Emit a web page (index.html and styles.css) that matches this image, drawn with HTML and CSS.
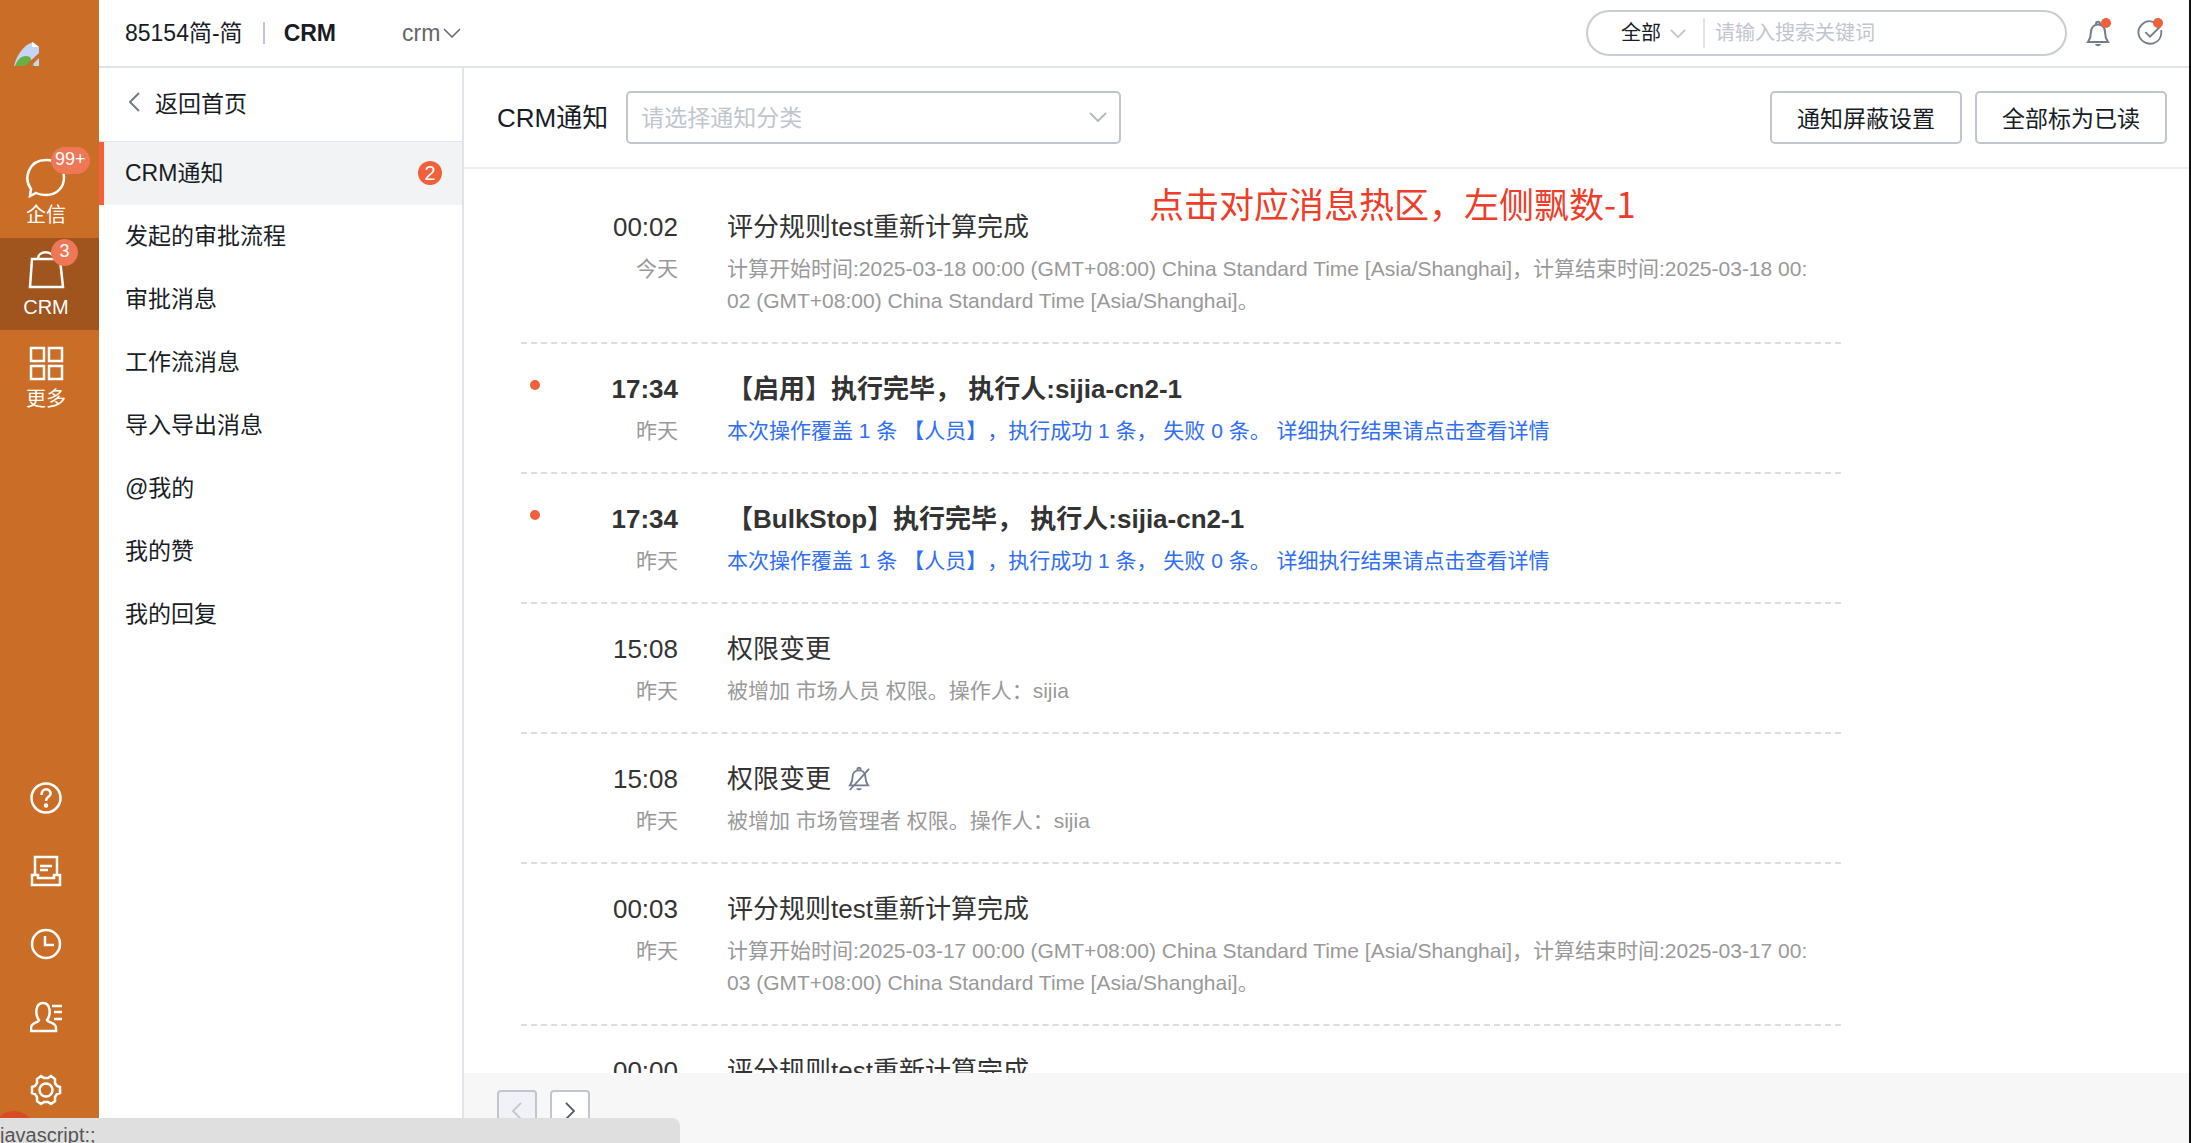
FILE: index.html
```
<!DOCTYPE html>
<html lang="zh-CN">
<head>
  <meta charset="UTF-8" />
  <meta name="viewport" content="width=device-width, initial-scale=1.0"/>
  <title>CRM通知</title>
  <link rel="stylesheet" href="styles.css">
</head>
<body>

  <aside class="rail">
    <svg class="avatar" viewBox="0 0 25 24">
      <path d="M0 24C3 12 10 3 19 0L25 5V24Z" fill="#c5d6f4"/>
      <path d="M18 0L25 5H18Z" fill="#fff"/>
      <path d="M1 24C4 15 10 12 16 15L20 24Z" fill="#6aae45"/>
      <path d="M11 24L25 11V16L17 24Z" fill="#ca6d26"/>
    </svg>

    <nav class="rail-menu">
      <a href="#" class="rail-item">
        <span class="rail-icon">
          <svg viewBox="0 0 40 40"><path d="M4 38L5 31C-3 20 3 2 20 2C44 2 44 37 20 37C15 37 12 36 10 35Z"/></svg>
          <span class="badge">99+</span>
        </span>
        企信
      </a>
      <a href="#" class="rail-item active">
        <span class="rail-icon">
          <svg viewBox="0 0 40 40"><path d="M6 9H34L37 37H4ZM12 9C12 0 27 0 28 9"/></svg>
          <span class="badge">3</span>
        </span>
        CRM
      </a>
      <a href="#" class="rail-item">
        <span class="rail-icon">
          <svg viewBox="0 0 40 40"><path d="M5 6H18V19H5ZM23 6H36V19H23ZM5 24H18V37H5ZM23 24H36V37H23Z"/></svg>
        </span>
        更多
      </a>
    </nav>

    <nav class="rail-tools">
      <a href="#" aria-label="帮助"><svg viewBox="0 0 32 32"><circle cx="16" cy="16" r="14.5"/><path d="M11.500 13C11.500 5 21 6 20.500 12C20 15 16 15 16 19"/><circle cx="16" cy="23.500" r="1"/></svg></a>
      <a href="#" aria-label="收件箱"><svg viewBox="0 0 32 32"><path d="M5 20V2H27V20M2 20H8V23H24V20H30V30H2ZM10 11H22M10 15H18"/></svg></a>
      <a href="#" aria-label="最近"><svg viewBox="0 0 32 32"><circle cx="16" cy="16" r="14"/><path d="M15 8V17H24"/></svg></a>
      <a href="#" aria-label="联系人"><svg viewBox="0 0 32 32"><path d="M9 19C5 14 5 2 13 2S21 14 17 19C18 22 26 21 26 27V30H1V27C1 21 9 22 9 19ZM22 5H32M24 11H32M24 18H32"/></svg></a>
      <a href="#" aria-label="设置"><svg viewBox="0 0 32 32"><circle cx="16" cy="16" r="6.500"/><path d="M11 2L14 4H18L21 2L25 5V9L27 12L30 13V19L27 20L25 23V27L21 30L18 28H14L11 30L7 27V23L5 20L2 19V13L5 12L7 9V5Z"/></svg></a>
    </nav>
    <span class="rail-dot"></span>
  </aside>

  <div class="page">
    <header class="topbar">
      <span class="company">85154简-简</span>
      <strong class="app-name">CRM</strong>
      <button class="app-switch">crm<svg viewBox="0 0 18 10"><path d="M1 1L9 9L17 1"/></svg></button>
      <div class="search">
        <button class="search-scope">全部<svg viewBox="0 0 18 10"><path d="M1 1L9 9L17 1"/></svg></button>
        <input type="text" placeholder="请输入搜索关键词" aria-label="搜索">
      </div>
      <button class="top-icon" aria-label="提醒">
        <svg viewBox="0 0 24 28"><path d="M2 23H22C20 20 19 18 19 13C19 3 5 3 5 13C5 18 4 20 2 23ZM10 5C10 2 14 2 14 5"/><path class="fill" d="M9 25H15C14 28 10 28 9 25Z"/></svg>
      </button>
      <button class="top-icon" aria-label="待办">
        <svg viewBox="0 0 28 28"><path d="M20 3C8-3-2 9 3 19C9 30 28 27 26 11M9 13L14 18L25 7"/></svg>
      </button>
    </header>

    <div class="body">
      <nav class="side">
        <a href="#" class="back"><svg viewBox="0 0 11 20"><path d="M10 1L1 10L10 19"/></svg>返回首页</a>
        <a href="#" class="side-item active">CRM通知 <span class="count">2</span></a>
        <a href="#" class="side-item">发起的审批流程</a>
        <a href="#" class="side-item">审批消息</a>
        <a href="#" class="side-item">工作流消息</a>
        <a href="#" class="side-item">导入导出消息</a>
        <a href="#" class="side-item">@我的</a>
        <a href="#" class="side-item">我的赞</a>
        <a href="#" class="side-item">我的回复</a>
      </nav>

      <main class="main">
        <div class="toolbar">
          <label for="category">CRM通知</label>
          <div class="select-wrap">
            <select id="category"><option>请选择通知分类</option></select>
            <svg viewBox="0 0 18 10"><path d="M1 1L9 9L17 1"/></svg>
          </div>
          <button class="btn">通知屏蔽设置</button>
          <button class="btn">全部标为已读</button>
        </div>

        <p class="note">点击对应消息热区，左侧飘数-1</p>

        <div class="list">
          <article class="item">
            <div class="when"><time>00:02</time><span>今天</span></div>
            <div class="text">
              <h3>评分规则test重新计算完成</h3>
              <p>计算开始时间:2025-03-18 00:00 (GMT+08:00) China Standard Time [Asia/Shanghai]，计算结束时间:2025-03-18 00:02 (GMT+08:00) China Standard Time [Asia/Shanghai]。</p>
            </div>
          </article>
          <article class="item unread">
            <div class="when"><time>17:34</time><span>昨天</span></div>
            <div class="text">
              <h3>【启用】执行完毕， 执行人:sijia-cn2-1</h3>
              <p><a href="#">本次操作覆盖 1 条 【人员】，执行成功 1 条， 失败 0 条。 详细执行结果请点击查看详情</a></p>
            </div>
          </article>
          <article class="item unread">
            <div class="when"><time>17:34</time><span>昨天</span></div>
            <div class="text">
              <h3>【BulkStop】执行完毕， 执行人:sijia-cn2-1</h3>
              <p><a href="#">本次操作覆盖 1 条 【人员】，执行成功 1 条， 失败 0 条。 详细执行结果请点击查看详情</a></p>
            </div>
          </article>
          <article class="item">
            <div class="when"><time>15:08</time><span>昨天</span></div>
            <div class="text">
              <h3>权限变更</h3>
              <p>被增加 市场人员 权限。操作人：sijia</p>
            </div>
          </article>
          <article class="item">
            <div class="when"><time>15:08</time><span>昨天</span></div>
            <div class="text">
              <h3>权限变更 <svg class="muted" viewBox="0 0 24 26"><path d="M2 20H22C20 17 19 15 19 11C19 1 5 1 5 11C5 15 4 17 2 20ZM10 3C10 0 14 0 14 3M2 25L23 2"/><path class="fill" d="M9 23H15C14 26 10 26 9 23Z"/></svg></h3>
              <p>被增加 市场管理者 权限。操作人：sijia</p>
            </div>
          </article>
          <article class="item">
            <div class="when"><time>00:03</time><span>昨天</span></div>
            <div class="text">
              <h3>评分规则test重新计算完成</h3>
              <p>计算开始时间:2025-03-17 00:00 (GMT+08:00) China Standard Time [Asia/Shanghai]，计算结束时间:2025-03-17 00:03 (GMT+08:00) China Standard Time [Asia/Shanghai]。</p>
            </div>
          </article>
          <article class="item">
            <div class="when"><time>00:00</time></div>
            <div class="text">
              <h3>评分规则test重新计算完成</h3>
            </div>
          </article>
        </div>

        <footer class="pager">
          <button disabled aria-label="上一页"><svg viewBox="0 0 11 20"><path d="M10 1L1 10L10 19"/></svg></button>
          <button aria-label="下一页"><svg viewBox="0 0 11 20"><path d="M1 1L10 10L1 19"/></svg></button>
        </footer>
      </main>
    </div>
  </div>

  <div class="status">javascript:;</div>

</body>
</html>
```
FILE: styles.css
```
/* RESET & GLOBAL */
* {
  margin: 0; padding: 0; box-sizing: border-box;
}
body {
  display: flex;
  height: 100vh;
  overflow: hidden;
  position: relative;
  border-right: 2px solid #111;
  background: #fff;
  color: #181c25;
  font-family: "Liberation Sans", "Noto Sans CJK SC", sans-serif;
  font-size: 23px;
}
a { color: inherit; text-decoration: none; }
button, input, select {
  font: inherit; color: inherit;
  background: none; border: none; outline: none;
}
svg {
  fill: none; stroke: currentColor; stroke-width: 2;
  flex: none;
}
svg .fill { fill: currentColor; stroke: none; }

/* LEFT RAIL */
.rail {
  width: 99px; flex: none;
  display: flex; flex-direction: column;
  position: relative;
  background: #ca6d26;
  color: #fff;
}
.rail svg { stroke-width: 2.5; }
.rail .avatar {
  width: 25px; height: 24px;
  margin: 42px 14px 80px;
  stroke: none;
}
.rail-item {
  display: flex; flex-direction: column; align-items: center;
  height: 92px;
  padding: 12px 7px 0 0;
  font-size: 20px; line-height: 34px;
}
.rail-item.active { background: #a0551e; }
.rail-icon { position: relative; height: 40px; }
.rail-icon svg { width: 40px; height: 40px; display: block; }
.badge {
  position: absolute; left: 25px; top: -11px;
  height: 27px; min-width: 27px; padding: 0 4px;
  border-radius: 14px;
  background: #ee7757;
  font-size: 18px; line-height: 25px; text-align: center;
}
.rail-tools {
  margin-top: auto;
  padding: 0 7px 37px 0;
  display: flex; flex-direction: column; align-items: center;
  gap: 41px;
}
.rail-tools a, .rail-tools svg { display: block; width: 32px; height: 32px; }
.rail-dot {
  position: absolute; left: -6px; bottom: -8px;
  width: 40px; height: 40px; border-radius: 50%;
  background: #d94a26;
}

/* TOP BAR */
.page {
  flex: 1; min-width: 0;
  display: flex; flex-direction: column;
}
.topbar {
  display: flex; align-items: center;
  height: 68px;
  padding: 0 26px 0 26px;
  border-bottom: 2px solid #e1e3ea;
}
.company {
  padding-right: 20px;
  border-right: 2px solid #c1c5ce;
  line-height: 22px;
}
.app-name { margin-left: 19px; }
.app-switch { margin-left: 66px; color: #666; }
.app-switch svg { width: 18px; height: 10px; margin-left: 3px; stroke-width: 1.5; vertical-align: 3px; }
.search {
  display: flex; align-items: center;
  width: 481px; height: 46px;
  margin-left: auto; padding-left: 33px;
  border: 2px solid #c9ccd4; border-radius: 23px;
  font-size: 20px;
}
.search-scope {
  display: flex; align-items: center; gap: 9px;
  padding-right: 17px;
  line-height: 30px;
  border-right: 2px solid #e1e3ea;
}
.search-scope svg { width: 16px; height: 9px; color: #c1c5ce; }
.search input { flex: 1; min-width: 0; padding: 0 10px; }
.search input::placeholder { color: #c1c5ce; opacity: 1; }
.top-icon {
  position: relative;
  margin-left: 18px;
  color: #737c8c;
}
.top-icon svg { display: block; width: 26px; height: 28px; }
.top-icon + .top-icon { margin-left: 26px; }
.top-icon::after {
  content: ""; position: absolute; right: 0; top: -1px;
  width: 10px; height: 10px; border-radius: 50%;
  background: #f0603a;
}

/* SIDE MENU */
.body { flex: 1; min-height: 0; display: flex; }
.side {
  width: 365px; flex: none;
  border-right: 2px solid #e1e3ea;
}
.back {
  display: flex; align-items: center; gap: 15px;
  height: 74px; padding: 0 0 5px 30px;
  border-bottom: 1px solid #e1e3ea;
}
.back svg { width: 11px; height: 20px; color: #737c8c; }
.side-item {
  display: flex; align-items: center; justify-content: space-between;
  height: 63px; padding: 0 20px 6px 26px;
}
.side-item.active {
  padding-left: 21px;
  border-left: 5px solid #f0603a;
  background: #f2f3f5;
}
.count {
  width: 24px; height: 24px; margin-top: 5px;
  border-radius: 50%;
  background: #f0603a; color: #fff;
  font-size: 20px; line-height: 24px; text-align: center;
}

/* MAIN */
.main {
  flex: 1; min-width: 0;
  display: flex; flex-direction: column;
  position: relative;
}
.toolbar {
  display: flex; align-items: center;
  height: 101px; flex: none;
  padding: 0 22px 0 33px;
  border-bottom: 2px solid #eee;
}
.toolbar label { padding-bottom: 5px; font-size: 26px; }
.select-wrap { position: relative; margin: 0 auto 0 18px; }
.select-wrap select {
  width: 495px; height: 53px;
  padding: 0 13px;
  appearance: none;
  border: 2px solid #c1c5ce; border-radius: 5px;
  color: #c1c5ce;
}
.select-wrap svg {
  position: absolute; right: 14px; top: 21px;
  width: 18px; height: 10px; color: #b4b9c3;
}
.btn {
  height: 53px; padding: 0 25px 2px;
  margin-left: 13px;
  border: 2px solid #c1c5ce; border-radius: 5px;
}
.note {
  position: absolute; left: 685px; top: 110px;
  color: #ee3d28;
  font-family: "Noto Sans CJK SC", sans-serif;
  font-size: 35px; line-height: 50px;
}
.list {
  flex: 1; min-height: 0; overflow: hidden;
  padding: 13px 348px 0 57px;
}
.item {
  display: flex; gap: 49px;
  position: relative;
  padding: 27px 0 25px;
  border-bottom: 2px dashed #ddd;
}
.item.unread::before {
  content: ""; position: absolute; left: 9px; top: 36px;
  width: 10px; height: 10px; border-radius: 50%;
  background: #f0603a;
}
.when {
  width: 157px; flex: none;
  text-align: right;
  color: #999; font-size: 21px;
}
.when time {
  display: block;
  margin-bottom: 8px;
  color: #333; font-size: 26px; line-height: 36px;
}
.when span { line-height: 32px; }
.text { flex: 1; padding-right: 24px; }
.text h3 {
  margin-bottom: 8px;
  color: #333; font-size: 26px; font-weight: normal; line-height: 36px;
}
.unread h3, .unread time { font-weight: bold; }
.text p {
  color: #999; font-size: 21px; line-height: 32px;
  word-break: break-all;
  text-spacing-trim: space-all;
}
.text a { color: #2f6ef5; }
.muted { width: 22px; height: 24px; margin-left: 10px; color: #737c8c; vertical-align: -3px; }

.pager {
  display: flex; gap: 13px;
  height: 70px; flex: none;
  padding: 17px 33px 0;
  background: #f7f7f7;
}
.pager button {
  width: 40px; height: 40px;
  border: 2px solid #c1c5ce; border-radius: 4px;
  background: #fff; color: #545861;
}
.pager button:disabled { background: #f0f2f7; color: #c1c5ce; }
.pager svg { width: 10px; height: 18px; vertical-align: -2px; }

/* LINK STATUS */
.status {
  position: absolute; left: 0; bottom: 0;
  width: 680px; height: 25px;
  border-top-right-radius: 8px;
  background: #dfdfdf; color: #555;
  font-size: 20px; line-height: 34px;
  overflow: hidden;
}
```
